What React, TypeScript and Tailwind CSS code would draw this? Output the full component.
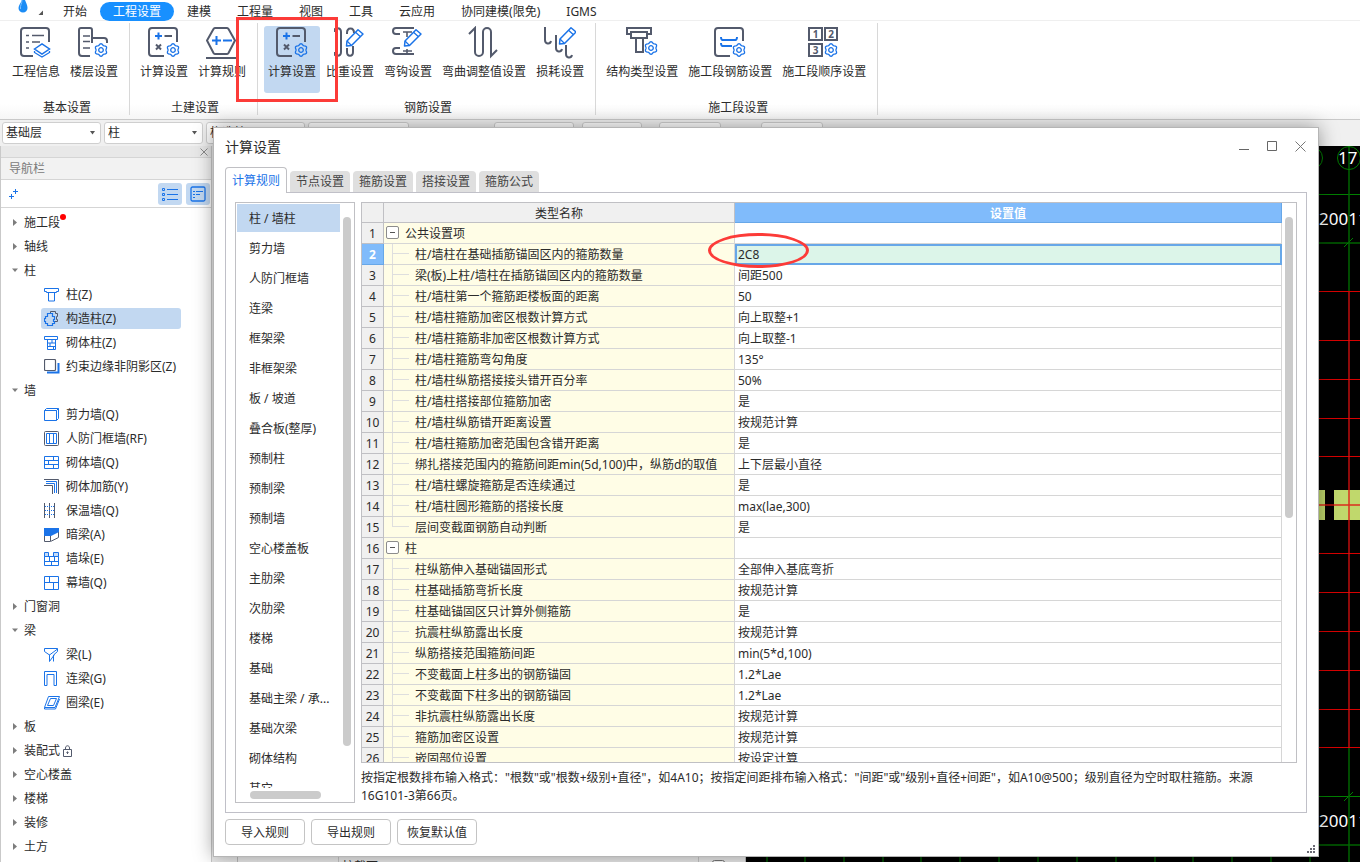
import type { ReactNode } from 'react';
import clsx from 'clsx';

const INK = '#535a6c';
const BLUE = '#1a73e8';

/* ---------- Ribbon icons ---------- */

// Six-lobed cog outline, 13px across
const GEAR_POINTS = Array.from({ length: 36 }, (_, i) => {
  const a = (i * Math.PI) / 18;
  const r = 5.6 + 0.7 * Math.cos(6 * a);
  return `${(r * Math.sin(a)).toFixed(2)},${(r * Math.cos(a)).toFixed(2)}`;
}).join(' ');

function Gear({ x, y }: { x: number; y: number }) {
  return (
    <g transform={`translate(${x} ${y})`} stroke={BLUE} strokeWidth="1.3" fill="none">
      <polygon points={GEAR_POINTS} />
      <circle r="2.3" />
    </g>
  );
}

function Pencil({ x, y }: { x: number; y: number }) {
  return (
    <g transform={`translate(${x} ${y})`} stroke={BLUE} strokeWidth="1.5" fill="#fff" strokeLinejoin="round">
      <path d="M0.5 17L1 12L12 0.8L17 5L5.500 16.500Z" />
      <path d="M9.500 3.300L14.500 7.700M1 12l4.500 4.500" fill="none" strokeWidth="1.300" />
    </g>
  );
}

function RibbonSvg({ children }: { children: ReactNode }) {
  return (
    <svg width="32" height="33" viewBox="0 0 32 33" fill="none" stroke={INK} strokeWidth="2" aria-hidden="true">
      {children}
    </svg>
  );
}

const projectInfo = (
  <RibbonSvg>
    <path d="M13 30H4a3 3 0 0 1-3-3V5a3 3 0 0 1 3-3h22a3 3 0 0 1 3 3v11" />
    <path d="M6 9.500h3M12 9.500h12M6 16h3M12 16h8M6 22h3" strokeWidth="1.600" />
    <path d="M14.500 23l7.500-5 7.500 5-7.500 5z" stroke={BLUE} strokeWidth="1.500" />
    <path d="M14.500 25l0 1.500 7.500 4.500 7.500-4.500V25" stroke={BLUE} strokeWidth="1.300" />
  </RibbonSvg>
);

const floorSettings = (
  <RibbonSvg>
    <path d="M12 30H4a3 3 0 0 1-3-3V4a2 2 0 0 1 2-2h9a2 2 0 0 1 2 2v13" />
    <path d="M14 12h12a3 3 0 0 1 3 3v2" />
    <path d="M5 10h7M5 15.500h7M5 22h7" strokeWidth="1.600" />
    <Gear x={23} y={24} />
  </RibbonSvg>
);

const calcSettings = (
  <RibbonSvg>
    <path d="M16 30H4a3 3 0 0 1-3-3V5a3 3 0 0 1 3-3h22a3 3 0 0 1 3 3v11" />
    <path d="M7 10h7M10.500 6.500v7" stroke={BLUE} />
    <path d="M16.500 10h7.500M8 18.500l5 5M13 18.500l-5 5" />
    <Gear x={25} y={24} />
  </RibbonSvg>
);

const calcRules = (
  <RibbonSvg>
    <path d="M9 2h12a2 2 0 0 1 1.500 1L29 14.500 22.500 27a2 2 0 0 1-1.500 1H9a2 2 0 0 1-1.500-1L1 14.500 7.500 3A2 2 0 0 1 9 2z" />
    <path d="M6 14.500h9M10.500 10v9M17 14.500h9" stroke={BLUE} />
    <path d="M0 32h30" />
  </RibbonSvg>
);

const weightSettings = (
  <RibbonSvg>
    <path d="M0 6c0-5 7-5 7 0v20c0 5-7 5-7 0" />
    <path d="M13 8V7c0-6 7-6 7 0M13 22v4c0 5 6 5 6 0v-6" />
    <Pencil x={12} y={3} />
  </RibbonSvg>
);

const hookSettings = (
  <RibbonSvg>
    <path d="M22 2H4a3 3 0 0 0-3 3 3 3 0 0 0 3 3h4M8 22H4a3 3 0 0 0-3 3 3 3 0 0 0 3 3h18" />
    <path d="M11 6h9M15 6v5M15 23v5M11 25h9" strokeWidth="1.600" />
    <Pencil x={12} y={3} />
  </RibbonSvg>
);

const bendSettings = (
  <RibbonSvg>
    <path d="M1 8l6-6v24a4 4 0 0 0 8 0V6a4 4 0 0 1 8 0v24l6-6" />
  </RibbonSvg>
);

const lossSettings = (
  <RibbonSvg>
    <path d="M1 1v13c0 4 5 5 6 1M12 9v13c0 4 5 5 6 1M22 19v9c0 4 5 5 6 1" />
    <Pencil x={15} y={1} />
  </RibbonSvg>
);

const structureType = (
  <RibbonSvg>
    <path d="M5 8H1V2h24v6h-4" />
    <path d="M5 6h16v6H5zM10 12v14h7V12" />
    <Gear x={25} y={22} />
  </RibbonSvg>
);

const sectionRebar = (
  <RibbonSvg>
    <path d="M16 30H4a3 3 0 0 1-3-3V5a3 3 0 0 1 3-3h22a3 3 0 0 1 3 3v10" />
    <path d="M7 11c0 3 1 3 3 3h10c2 0 3 0 3-3M7 17c0 3 1 3 3 3h8" stroke={BLUE} />
    <Gear x={25} y={24} />
  </RibbonSvg>
);

const sectionOrder = (
  <RibbonSvg>
    <path d="M1 2h13v12H1zM17 2h12v12H17zM1 18h13v12H1z" />
    <g className="font-bold" fill={INK} stroke="none" fontSize="10" textAnchor="middle">
      <text x="7.500" y="12">1</text>
      <text x="23" y="12">2</text>
      <text x="7.500" y="28">3</text>
    </g>
    <Gear x={23} y={24} />
  </RibbonSvg>
);

/* ---------- Navigation icons ---------- */

function NavSvg({ children }: { children: ReactNode }) {
  return (
    <svg width="16" height="16" viewBox="0 0 16 16" fill="none" stroke={BLUE} aria-hidden="true">
      {children}
    </svg>
  );
}

const navIcons = {
  column: <NavSvg><path d="M.5 1.500h14v3h-2v1h-10v-1h-2zM4.500 5.500v8.500h6V5.500" /></NavSvg>,
  structColumn: (
    <NavSvg>
      <path d="M6.500 3V.5h5v2h2v3h-1v3h1v2h-3" stroke={INK} />
      <path d="M3.500 2.500h5v3h2v3h-1v2h1v2h-2v2h-5v-2h-2v-2h-1v-3h1v-2h2z" strokeWidth="1.200" />
    </NavSvg>
  ),
  brickColumn: <NavSvg><path d="M.5 1.500h13v3h-13zM3.500 4.500v10h8v-10M3.500 8h8M3.500 11.500h8M8 5v3M6 8v3.500M9.500 11.500v3" /></NavSvg>,
  edge: (
    <NavSvg>
      <path d="M3 13.500h11.500V4" strokeWidth="2" />
      <rect x=".5" y=".5" width="11" height="11" rx="1" fill="#fff" stroke={INK} strokeWidth="1.200" />
    </NavSvg>
  ),
  shearWall: <NavSvg><path d="M.5 3.500h12v10H.5zM.5 3.500l2-2h12v10l-2 2M12.500 3.500l2-2" /></NavSvg>,
  defenceWall: (
    <NavSvg>
      <rect x=".5" y=".5" width="14" height="14" rx="1" stroke={INK} />
      <path d="M2.500 2.500h10v10h-10zM5.500 2.500v10M9.500 2.500v10" />
    </NavSvg>
  ),
  brickWall: <NavSvg><path d="M.5 1.500h14v12H.5zM.5 5.500h14M.5 9.500h14M9.500 1.500v4M4.500 5.500v4M9.500 9.500v4" /></NavSvg>,
  brickRebar: (
    <NavSvg>
      <path d="M0 .5h14.500V15M0 6.500h8.500V15" stroke={INK} />
      <path d="M2 2.500h10.500V14M2 4.500h8.500V14" />
    </NavSvg>
  ),
  insulation: (
    <NavSvg>
      <path d="M.5 0v15M5.500 0v15M10.500 0v15" stroke={INK} />
      <path d="M1 3.500h10M1 7.500h10M1 11.500h10" strokeDasharray="1 1" />
    </NavSvg>
  ),
  hiddenBeam: (
    <NavSvg>
      <path d="M.5 9v5.500h6l8-4V5M6.500 8v6" stroke={INK} />
      <path d="M0 1h15v4L7 9H0z" fill={BLUE} stroke="none" />
    </NavSvg>
  ),
  wallPier: (
    <NavSvg>
      <path d="M.5 1.500h4v4h-4zM9.500 1.500h5v4h-5z" fill="#c6dcf7" />
      <path d="M.5 5.500h14v9H.5zM.5 10.500h14M5.500 5.500v5M10.500 5.500v5M7.500 10.500v4" />
    </NavSvg>
  ),
  curtainWall: <NavSvg><path d="M.5 1.500h14v13H.5zM.5 7.500h14M5.500 1.500v6M9.500 7.500v7" /></NavSvg>,
  beam: <NavSvg><path d="M.5 1.500h13v3l-4 3.500v6.500M.5 1.500v3l5 3.500 8-6M5.500 7.500v7l5-7" /></NavSvg>,
  couplingBeam: <NavSvg><path d="M.5 14.500V.5h12v14h-2.500V3.500H3v11z" /></NavSvg>,
  ringBeam: <NavSvg><path d="M4.500 1.500h11l-4.500 11H.5zM6.500 3.500h6l-3 7h-6zM.5 12.500v1.500h11l4-10" /></NavSvg>,
};

/* ---------- Data ---------- */

const MENUS = ['开始', '工程设置', '建模', '工程量', '视图', '工具', '云应用', '协同建模(限免)', 'IGMS'];

const RIBBON: { title: string; items: { label: string; icon: ReactNode; active?: boolean }[] }[] = [
  {
    title: '基本设置',
    items: [
      { label: '工程信息', icon: projectInfo },
      { label: '楼层设置', icon: floorSettings },
    ],
  },
  {
    title: '土建设置',
    items: [
      { label: '计算设置', icon: calcSettings },
      { label: '计算规则', icon: calcRules },
    ],
  },
  {
    title: '钢筋设置',
    items: [
      { label: '计算设置', icon: calcSettings, active: true },
      { label: '比重设置', icon: weightSettings },
      { label: '弯钩设置', icon: hookSettings },
      { label: '弯曲调整值设置', icon: bendSettings },
      { label: '损耗设置', icon: lossSettings },
    ],
  },
  {
    title: '施工段设置',
    items: [
      { label: '结构类型设置', icon: structureType },
      { label: '施工段钢筋设置', icon: sectionRebar },
      { label: '施工段顺序设置', icon: sectionOrder },
    ],
  },
];

type NavGroup = {
  label: string;
  open?: boolean;
  dot?: boolean;
  locked?: boolean;
  children?: { label: string; icon: keyof typeof navIcons; active?: boolean }[];
};

const NAV: NavGroup[] = [
  { label: '施工段', dot: true },
  { label: '轴线' },
  {
    label: '柱',
    open: true,
    children: [
      { label: '柱(Z)', icon: 'column' },
      { label: '构造柱(Z)', icon: 'structColumn', active: true },
      { label: '砌体柱(Z)', icon: 'brickColumn' },
      { label: '约束边缘非阴影区(Z)', icon: 'edge' },
    ],
  },
  {
    label: '墙',
    open: true,
    children: [
      { label: '剪力墙(Q)', icon: 'shearWall' },
      { label: '人防门框墙(RF)', icon: 'defenceWall' },
      { label: '砌体墙(Q)', icon: 'brickWall' },
      { label: '砌体加筋(Y)', icon: 'brickRebar' },
      { label: '保温墙(Q)', icon: 'insulation' },
      { label: '暗梁(A)', icon: 'hiddenBeam' },
      { label: '墙垛(E)', icon: 'wallPier' },
      { label: '幕墙(Q)', icon: 'curtainWall' },
    ],
  },
  { label: '门窗洞' },
  {
    label: '梁',
    open: true,
    children: [
      { label: '梁(L)', icon: 'beam' },
      { label: '连梁(G)', icon: 'couplingBeam' },
      { label: '圈梁(E)', icon: 'ringBeam' },
    ],
  },
  { label: '板' },
  { label: '装配式', locked: true },
  { label: '空心楼盖' },
  { label: '楼梯' },
  { label: '装修' },
  { label: '土方' },
];

const TABS = ['计算规则', '节点设置', '箍筋设置', '搭接设置', '箍筋公式'];

const CATEGORIES = [
  '柱 / 墙柱', '剪力墙', '人防门框墙', '连梁', '框架梁', '非框架梁', '板 / 坡道',
  '叠合板(整厚)', '预制柱', '预制梁', '预制墙', '空心楼盖板', '主肋梁', '次肋梁',
  '楼梯', '基础', '基础主梁 / 承...', '基础次梁', '砌体结构', '其它',
];

type Row = { name: string; value?: string; group?: boolean; last?: boolean };

const ROWS: Row[] = [
  { name: '公共设置项', group: true },
  { name: '柱/墙柱在基础插筋锚固区内的箍筋数量', value: '2C8' },
  { name: '梁(板)上柱/墙柱在插筋锚固区内的箍筋数量', value: '间距500' },
  { name: '柱/墙柱第一个箍筋距楼板面的距离', value: '50' },
  { name: '柱/墙柱箍筋加密区根数计算方式', value: '向上取整+1' },
  { name: '柱/墙柱箍筋非加密区根数计算方式', value: '向上取整-1' },
  { name: '柱/墙柱箍筋弯勾角度', value: '135°' },
  { name: '柱/墙柱纵筋搭接接头错开百分率', value: '50%' },
  { name: '柱/墙柱搭接部位箍筋加密', value: '是' },
  { name: '柱/墙柱纵筋错开距离设置', value: '按规范计算' },
  { name: '柱/墙柱箍筋加密范围包含错开距离', value: '是' },
  { name: '绑扎搭接范围内的箍筋间距min(5d,100)中，纵筋d的取值', value: '上下层最小直径' },
  { name: '柱/墙柱螺旋箍筋是否连续通过', value: '是' },
  { name: '柱/墙柱圆形箍筋的搭接长度', value: 'max(lae,300)' },
  { name: '层间变截面钢筋自动判断', value: '是', last: true },
  { name: '柱', group: true },
  { name: '柱纵筋伸入基础锚固形式', value: '全部伸入基底弯折' },
  { name: '柱基础插筋弯折长度', value: '按规范计算' },
  { name: '柱基础锚固区只计算外侧箍筋', value: '是' },
  { name: '抗震柱纵筋露出长度', value: '按规范计算' },
  { name: '纵筋搭接范围箍筋间距', value: 'min(5*d,100)' },
  { name: '不变截面上柱多出的钢筋锚固', value: '1.2*Lae' },
  { name: '不变截面下柱多出的钢筋锚固', value: '1.2*Lae' },
  { name: '非抗震柱纵筋露出长度', value: '按规范计算' },
  { name: '箍筋加密区设置', value: '按规范计算' },
  { name: '嵌固部位设置', value: '按设定计算' },
];

const SELECTED_ROW = 1;

/* ---------- Application shell ---------- */

function MenuBar() {
  return (
    <nav className="flex h-[21px] shrink-0 items-center border-b border-[#efefef] bg-white">
      <div className="flex w-[50px] items-start gap-2 pl-4">
        <svg width="14" height="21" viewBox="0 0 14 21" aria-hidden="true">
          <path d="M6 0h3c1 3 2.500 5 2.500 8a4.500 4.500 0 0 1-9 0C2.500 5 5 3 6 0z" fill="#1b8cf5" />
          <path d="M6 0c0 4-2 5-1.500 9" stroke="#7cc0ff" fill="none" />
        </svg>
        <svg width="6" height="21" viewBox="0 0 6 21" aria-hidden="true">
          <path d="M5 10.500v4.500H.5z" fill="#555" />
        </svg>
      </div>
      {MENUS.map((m) => (
        <button
          key={m}
          className={clsx(
            'mt-[3px] h-[19px] rounded-full px-[13px] leading-[19px] whitespace-nowrap',
            m === '工程设置' && 'bg-[#1890ff] text-white',
          )}
        >
          {m}
        </button>
      ))}
    </nav>
  );
}

function Ribbon() {
  return (
    <div className="flex h-[98px] shrink-0 bg-gradient-to-b from-white from-85% to-[#f6f6f6] pt-0.5 pb-1">
      {RIBBON.map((group) => (
        <section key={group.title} className="flex flex-col border-r border-[#d8d8d8] pr-[7px] pl-1.5 first:pl-2">
          <div className="flex gap-0.5 pt-[3px]">
            {group.items.map((item) => (
              <div key={item.label} className="relative">
                <button
                  className={clsx(
                    'flex h-[67px] flex-col items-center rounded-[3px] px-1',
                    item.active && 'bg-[#c2d8f1]',
                  )}
                >
                  {item.icon}
                  <span className="mt-[3px] leading-5 whitespace-nowrap">{item.label}</span>
                </button>
                {/* Red call-out around the active tool */}
                {item.active && (
                  <div className="pointer-events-none absolute -top-[9px] -right-[18px] -bottom-[9px] -left-7 z-10 border-[3px] border-[#fc3b38]" />
                )}
              </div>
            ))}
          </div>
          <h2 className="mt-[5px] pl-1 text-center leading-5">{group.title}</h2>
        </section>
      ))}
    </div>
  );
}

function ToolSelect({ label, value, className }: { label: string; value: string; className: string }) {
  return (
    <div className={clsx('relative shrink-0', className)}>
      <select
        aria-label={label}
        defaultValue={value}
        className="h-[22px] w-full appearance-none rounded-[3px] border border-[#cfcfcf] bg-white pl-[3px] leading-5"
      >
        <option>{value}</option>
      </select>
      <svg className="pointer-events-none absolute top-[9px] right-1.5" width="5" height="4" viewBox="0 0 5 4" aria-hidden="true">
        <path d="M0 0h5L2.500 3.500z" fill="#555" />
      </svg>
    </div>
  );
}

function ToolBar() {
  return (
    <div className="flex h-[27px] shrink-0 items-center gap-[3px] border-t border-[#c9c9c9] bg-[#f0f0f0] pl-0.5">
      <ToolSelect label="楼层" value="基础层" className="w-[99px]" />
      <ToolSelect label="构件类别" value="柱" className="w-[99px]" />
      <ToolSelect label="构件类型" value="构造柱" className="w-[99px]" />
      <ToolSelect label="构件" value="" className="w-[101px]" />
      <input type="checkbox" aria-label="锁定" className="ml-0.5 size-[13px]" />
      <ToolSelect label="对齐" value="" className="ml-16 w-20" />
      <ToolSelect label="旋转" value="" className="ml-[5px] w-[60px]" />
      <ToolSelect label="偏移 X" value="" className="ml-[14px] w-[62px]" />
      <ToolSelect label="偏移 Y" value="" className="ml-[37px] w-[62px]" />
    </div>
  );
}

function Sidebar() {
  return (
    <aside className="flex w-[212px] shrink-0 flex-col border-x border-[#c9c9c9] bg-white">
      <div className="flex h-3 items-center justify-end border-b border-[#d5d5d5] bg-[#e8e8e8] pr-[3px]">
        <button aria-label="关闭导航栏">
          <svg width="8" height="8" viewBox="0 0 8 8" stroke="#8a8a8a" aria-hidden="true">
            <path d="M.5 .5l7 7M7.500 .5l-7 7" />
          </svg>
        </button>
      </div>
      <h2 className="h-[22px] border-b border-[#d5d5d5] bg-[#f2f2f2] pl-2 leading-[22px] text-[#7a7a7a]">导航栏</h2>
      <div className="flex h-7 items-center gap-1 border-b border-[#d5d5d5] pr-px pl-2">
        <button className="mr-auto" aria-label="展开">
          <svg width="10" height="10" viewBox="0 0 10 10" stroke={BLUE} fill="none" aria-hidden="true">
            <path d="M6.500 0v5M4 2.500h5M2.500 5v5M0 7.500h5" />
          </svg>
        </button>
        <button className="flex h-[22px] w-6 items-center justify-center rounded-[3px] bg-[#c2d8f1]" aria-label="列表">
          <svg width="16" height="14" viewBox="0 0 16 14" stroke={BLUE} fill="none" aria-hidden="true">
            <path d="M5 2.500h11M5 7.500h11M5 12.500h11" />
            <path d="M.5 1.500h2v2h-2zM.5 6.500h2v2h-2zM.5 11.500h2v2h-2z" />
          </svg>
        </button>
        <button className="flex h-[22px] w-6 items-center justify-center rounded-[3px] bg-[#c2d8f1]" aria-label="详情">
          <svg width="16" height="16" viewBox="0 0 16 16" stroke={BLUE} fill="none" aria-hidden="true">
            <rect x="1" y="1" width="14" height="14" rx="1.500" strokeWidth="1.300" />
            <path d="M3 5.500h2M6 5.500h7M3 8.500h2M6 8.500h4M3 11.500h2" />
          </svg>
        </button>
      </div>
      <ul className="min-h-0 flex-1 overflow-hidden pt-[3px]">
        {NAV.map((group) => (
          <li key={group.label}>
            <button className="flex h-6 w-full items-center pl-[11px]">
              <svg className="mb-0.5" width="6" height="7" viewBox="0 0 6 7" fill="#7d7d7d" aria-hidden="true">
                {group.open ? <path d="M0 1.500h6L3 5z" /> : <path d="M1 0l4 3.500L1 7z" />}
              </svg>
              <span className="relative ml-1.5 leading-6">
                {group.label}
                {group.dot && <i className="absolute top-[3px] -right-1.5 size-1.5 rounded-full bg-[#ff0000]" />}
              </span>
              {group.locked && (
                <svg className="ml-0.5" width="11" height="12" viewBox="0 0 11 12" fill="none" stroke={INK} aria-hidden="true">
                  <path d="M1.500 4.500h8v7h-8zM3.500 4.500V3c0-3 4-3 4 0v1.500M5.500 7v2" />
                  <circle cx="5.500" cy="7.500" r=".7" />
                </svg>
              )}
            </button>
            {group.children && (
              <div className="flex flex-col gap-[3px] pt-px pb-0.5 pl-10">
                {group.children.map((child) => (
                  <button
                    key={child.label}
                    className={clsx(
                      'flex h-[21px] w-[140px] items-center gap-1.5 rounded-[3px] pl-[3px] whitespace-nowrap',
                      child.active && 'bg-[#c2d8f1]',
                    )}
                  >
                    {navIcons[child.icon]}
                    <span className="pt-px">{child.label}</span>
                  </button>
                ))}
              </div>
            )}
          </li>
        ))}
      </ul>
    </aside>
  );
}

function PropertyPanel() {
  return (
    <div className="flex w-[534px] shrink-0 flex-col justify-end border-r border-[#bbb] bg-[#ececec]">
      <div className="flex h-[5px] items-start overflow-hidden">
        <span className="h-full w-[26px] border-r border-[#bbb]" />
        <span className="h-full w-[101px] border-r border-[#c8c8c8]" />
        <span className="h-full w-[360px] border-r border-[#c8c8c8] pt-0.5 pl-[3px] leading-4">柱截面</span>
        <input type="checkbox" aria-label="截面附加" className="mt-[3px] ml-[13px] size-[13px] shrink-0" />
      </div>
    </div>
  );
}

const RED_LINES = [291, 340, 379, 418, 456, 553, 592, 631, 670, 709, 747];
const BOTTOM_GRID = [21, 59, 98, 137, 175, 214, 253, 292, 331, 370, 409, 447, 486, 525, 564];

// Plan view; origin is the top-left corner of the drawing area
function PlanCanvas() {
  return (
    <div className="flex min-w-0 flex-1 justify-end overflow-hidden bg-black">
      <svg width="614" height="716" viewBox="0 146 614 716" fill="none" className="shrink-0">
        <path d="M0 194.500h614M0 796.500h614" stroke="#008000" />
        <path d="M0 243h614M0 845h614" stroke="#004a00" strokeWidth="2" />
        <path d="M598 247l9-9M598 801l9-9" stroke="#008000" />
        <path d="M603 146v146M603 748v114" stroke="#006400" strokeWidth="1.500" />
        <path d="M573 490h6v30h-6zM588 490h26v30h-26z" fill="#c0d86c" />
        {RED_LINES.map((y) => (
          <path key={y} d={`M0 ${y + 0.5}h614`} stroke="#d80000" />
        ))}
        <path d="M0 505h614M603 292v456" stroke="#e01010" strokeOpacity=".85" strokeWidth="1.500" />
        {BOTTOM_GRID.map((x) => (
          <path key={x} d={`M${x} 850v12`} stroke="#005a00" strokeWidth="1.500" />
        ))}
        <circle cx="603" cy="158" r="11.500" stroke="#008000" />
        <circle cx="565" cy="158" r="11.500" stroke="#008000" />
        <g fill="#fff" fontSize="17">
          <text x="592" y="164">17</text>
          <text x="573" y="225">20011</text>
          <text x="573" y="827">20011</text>
        </g>
      </svg>
    </div>
  );
}

/* ---------- Calculation settings dialog ---------- */

function TitleBar() {
  return (
    <header className="flex h-[39px] shrink-0 items-center pr-1 pb-0.5 pl-[11px]">
      <h1 className="mr-auto text-sm">计算设置</h1>
      <button className="flex size-7 items-center justify-center" aria-label="最小化">
        <svg width="11" height="11" viewBox="0 0 11 11" stroke="#666" fill="none" aria-hidden="true"><path d="M0 8.500h10" /></svg>
      </button>
      <button className="flex size-7 items-center justify-center" aria-label="最大化">
        <svg width="11" height="11" viewBox="0 0 11 11" stroke="#666" fill="none" aria-hidden="true"><path d="M.5 .5h9v9h-9z" /></svg>
      </button>
      <button className="flex size-7 items-center justify-center" aria-label="关闭">
        <svg width="11" height="11" viewBox="0 0 11 11" stroke="#777" fill="none" aria-hidden="true"><path d="M.5 .5l10 10M10.500 .5l-10 10" /></svg>
      </button>
    </header>
  );
}

function CategoryList() {
  return (
    <div className="flex w-[120px] shrink-0 border border-[#c0c0c4] p-px">
      <div className="flex min-w-0 flex-1 flex-col">
        <ul className="min-h-0 flex-1 overflow-hidden">
          {CATEGORIES.map((c, i) => (
            <li key={c} className="mb-0.5">
              <button className={clsx('h-7 w-full pt-0.5 pl-3 text-left whitespace-nowrap', i === 0 && 'bg-[#c2d8f1]')}>{c}</button>
            </li>
          ))}
        </ul>
        <div className="mt-[3px] mb-0.5 ml-[13px] h-2 w-[71px] rounded-full bg-[#cbcbcb]" />
      </div>
      <div className="w-[13px] pt-[13px] pl-[3px]">
        <div className="h-[529px] w-2 rounded-full bg-[#cbcbcb]" />
      </div>
    </div>
  );
}

function NameCell({ row }: { row: Row }) {
  if (row.group) {
    return (
      <div className="flex h-5 items-center gap-1.5 pl-0.5">
        <button className="mb-0.5 flex size-[13px] items-center justify-center rounded-[2px] border border-[#8c8c8c] bg-white" aria-label="折叠">
          <span className="h-px w-[5px] bg-[#555]" />
        </button>
        <span className="pt-0.5">{row.name}</span>
      </div>
    );
  }
  return (
    <div className="flex h-5 items-center pl-2">
      <span className="mr-1.5 flex w-[17px] flex-col self-stretch">
        <span className="h-[10px] border-b border-l border-[#dedede]" />
        {!row.last && <span className="grow border-l border-[#dedede]" />}
      </span>
      <span className="pt-0.5">{row.name}</span>
    </div>
  );
}

function SettingsTable() {
  return (
    <div className="relative flex min-h-0 flex-1">
      <div className="flex min-w-0 flex-1 overflow-hidden border border-[#c0c0c4]">
        <div className="min-w-0 flex-1">
          <table className="w-full table-fixed border-separate border-spacing-0">
            <colgroup>
              <col className="w-[22px]" />
              <col className="w-[351px]" />
              <col />
            </colgroup>
            <thead>
              <tr className="h-5">
                <th className="border-r border-b border-[#c0c0c4] bg-[#f0f0f0] p-0" />
                <th className="border-r border-b border-[#c0c0c4] bg-[#f0f0f0] p-0 pt-0.5 font-normal">类型名称</th>
                <th className="border-r border-b border-[#67a7e8] bg-[#80bbfb] p-0 pt-0.5 font-bold text-white">设置值</th>
              </tr>
            </thead>
            <tbody>
              {ROWS.map((row, i) => {
                const selected = i === SELECTED_ROW;
                return (
                  <tr key={i} className="h-[21px]">
                    <th
                      scope="row"
                      className={clsx(
                        'border-r border-b p-0 pt-0.5',
                        selected
                          ? 'border-[#67a7e8] bg-[#80bbfb] font-bold text-white'
                          : 'border-[#c0c0c4] bg-[#f0f0f0] font-normal',
                      )}
                    >
                      {i + 1}
                    </th>
                    <td className="overflow-hidden border-r border-b border-[#d6d6d6] bg-[#fffde6] p-0 whitespace-nowrap">
                      <NameCell row={row} />
                    </td>
                    {selected ? (
                      <td className="p-0">
                        <input
                          aria-label={row.name}
                          defaultValue={row.value}
                          className="block h-[21px] w-full border-2 border-[#67a7e8] bg-[#dcf5e9] pl-px outline-none"
                        />
                      </td>
                    ) : (
                      <td className="border-r border-b border-[#d6d6d6] p-0 pt-0.5 pl-[3px]">{row.value}</td>
                    )}
                  </tr>
                );
              })}
            </tbody>
          </table>
        </div>
        <div className="w-[14px] shrink-0 pt-[14px] pl-[3px]">
          <div className="h-[301px] w-2 rounded-full bg-[#cbcbcb]" />
        </div>
      </div>
      {/* Hand-drawn ring over the edited value */}
      <div className="pointer-events-none absolute top-[31px] left-[347px] h-[35px] w-[101px] rounded-[50%] border-[3px] border-[#fc3b38]" />
    </div>
  );
}

function SettingsDialog() {
  return (
    <div
      role="dialog"
      aria-label="计算设置"
      className="absolute top-[127px] right-[41px] bottom-[5px] left-[213px] flex flex-col border border-[#b5b5b5] bg-white shadow-[0_0_18px_rgba(0,0,0,0.38)]"
    >
      <TitleBar />
      <div role="tablist" className="relative z-10 -mb-px flex h-[26px] shrink-0 items-end gap-[3px] px-[11px]">
        {TABS.map((t, i) => (
          <button
            key={t}
            role="tab"
            aria-selected={i === 0}
            className={clsx(
              'rounded-t-[4px] px-1.5',
              i === 0
                ? 'h-[26px] border border-b-0 border-[#c0c0c4] bg-white text-[#1a73e8]'
                : 'mb-px h-[21px] bg-[#dfdfdf] text-[#444]',
            )}
          >
            {t}
          </button>
        ))}
      </div>
      <div className="mx-[11px] flex min-h-0 flex-1 gap-1.5 border border-[#c0c0c8] p-[9px]">
        <CategoryList />
        <div className="flex min-w-0 flex-1 flex-col">
          <SettingsTable />
          <p className="h-10 shrink-0 pt-1.5 leading-[18px]">
            按指定根数排布输入格式："根数"或"根数+级别+直径"，如4A10；按指定间距排布输入格式："间距"或"级别+直径+间距"，如A10@500；级别直径为空时取柱箍筋。来源16G101-3第66页。
          </p>
        </div>
      </div>
      <footer className="flex shrink-0 items-center gap-1.5 px-[11px] pt-1.5 pb-[11px]">
        {['导入规则', '导出规则', '恢复默认值'].map((b) => (
          <button key={b} className="h-[26px] w-20 rounded-[4px] border border-[#c4c4c4] bg-white pt-0.5">{b}</button>
        ))}
      </footer>
      <svg className="absolute right-[3px] bottom-[3px]" width="8" height="8" viewBox="0 0 8 8" fill="#6b6b75" aria-hidden="true">
        <path d="M6 0h2v2H6zM3 3h2v2H3zM6 3h2v2H6zM0 6h2v2H0zM3 6h2v2H3zM6 6h2v2H6z" />
      </svg>
    </div>
  );
}

export default function App() {
  return (
    <div className="relative flex h-screen flex-col overflow-hidden bg-[#f0f0f0] font-['Noto_Sans','Noto_Sans_CJK_SC',sans-serif] text-xs text-[#2b2b2b]">
      <MenuBar />
      <Ribbon />
      <ToolBar />
      <div className="flex min-h-0 flex-1">
        <Sidebar />
        <PropertyPanel />
        <PlanCanvas />
      </div>
      <SettingsDialog />
    </div>
  );
}
